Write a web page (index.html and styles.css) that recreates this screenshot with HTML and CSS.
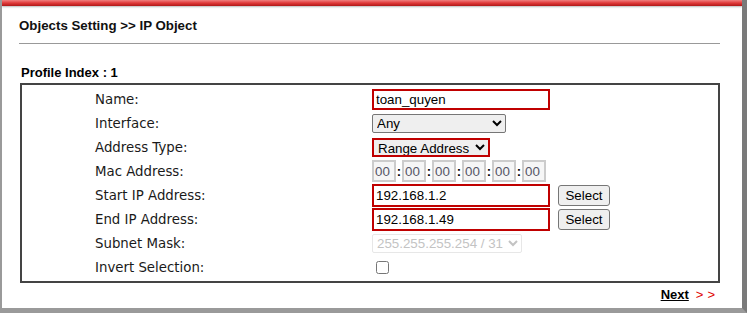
FILE: index.html
```html
<!DOCTYPE html>
<html lang="en">
<head>
  <title>IP Object</title>
  <link rel="stylesheet" href="styles.css">
</head>
<body>
  <div class="page">
    <div class="topbar"></div>
    <div class="content">
      <h1 class="title">Objects Setting &gt;&gt; IP Object</h1>
      <hr class="sep">
      <div class="profile">Profile Index : 1</div>
      <div class="box">
        <div class="row">
          <label class="lbl">Name:</label>
          <div class="ctl"><input type="text" class="txt mark name" value="toan_quyen"></div>
        </div>
        <div class="row">
          <label class="lbl">Interface:</label>
          <div class="ctl">
            <select class="sel iface"><option>Any</option></select>
          </div>
        </div>
        <div class="row">
          <label class="lbl">Address Type:</label>
          <div class="ctl">
            <select class="sel mark atype"><option>Range Address</option></select>
          </div>
        </div>
        <div class="row">
          <label class="lbl">Mac Address:</label>
          <div class="ctl mac">
            <input class="macbox" value="00" disabled><span class="colon">:</span>
            <input class="macbox" value="00" disabled><span class="colon">:</span>
            <input class="macbox" value="00" disabled><span class="colon">:</span>
            <input class="macbox" value="00" disabled><span class="colon">:</span>
            <input class="macbox" value="00" disabled><span class="colon">:</span>
            <input class="macbox" value="00" disabled>
          </div>
        </div>
        <div class="row">
          <label class="lbl">Start IP Address:</label>
          <div class="ctl">
            <input type="text" class="txt mark ip" value="192.168.1.2">
            <button class="btn">Select</button>
          </div>
        </div>
        <div class="row">
          <label class="lbl">End IP Address:</label>
          <div class="ctl">
            <input type="text" class="txt mark ip" value="192.168.1.49">
            <button class="btn">Select</button>
          </div>
        </div>
        <div class="row">
          <label class="lbl">Subnet Mask:</label>
          <div class="ctl">
            <select class="sel mask" disabled><option>255.255.255.254 / 31</option></select>
          </div>
        </div>
        <div class="row">
          <label class="lbl">Invert Selection:</label>
          <div class="ctl"><input type="checkbox" class="chk"></div>
        </div>
      </div>
      <div class="nav">
        <a href="#" class="next">Next</a><span class="arrows">&gt;&gt;</span>
      </div>
    </div>
  </div>
</body>
</html>
```

FILE: styles.css
```css
body {
  margin: 0;
  background: #fff;
  font-family: "Liberation Sans", Arial, sans-serif;
}

.page {
  width: 747px;
  height: 313px;
  box-sizing: border-box;
  border-left: 2px solid #9a9a9a;
  border-right: 5px solid #7a7a7a;
  border-bottom: 5px solid #9a9a9a;
  overflow: hidden;
}

.topbar {
  height: 6px;
  background: linear-gradient(#f08080, #e03a3a 50%, #b01818);
  box-shadow: 0 1px 2px #bbb;
}

.content {
  padding: 12px 22px 0 17px;
}

.title {
  margin: 0;
  font-size: 13.3px;
  font-weight: bold;
  color: #111;
  line-height: 16px;
}

.sep {
  margin: 9px 0 0 0;
  border: 0;
  border-top: 1px solid #999;
  height: 0;
}

.profile {
  margin: 21px 0 0 2px;
  font-size: 13px;
  font-weight: bold;
  line-height: 15px;
}

.box {
  margin: 3px 0 0 1px;
  border: 2px solid #444;
  padding: 2px 0 2px;
}

.row {
  display: grid;
  grid-template-columns: 350px 1fr;
  height: 24px;
  align-items: center;
}

.lbl {
  padding-left: 73px;
  font-family: "DejaVu Sans", Verdana, sans-serif;
  font-size: 13.33px;
  color: #1a1a1a;
}

.ctl {
  display: flex;
  align-items: center;
  gap: 8px;
}

.txt {
  box-sizing: border-box;
  font-family: "Liberation Sans", Arial, sans-serif;
  font-size: 13.33px;
  padding: 0 2px;
  margin: 0;
  border: 1px solid #767676;
}

.mark {
  border: 2px solid #c00000;
}

.name {
  width: 178px;
  height: 21px;
}

.ip {
  width: 178px;
  height: 23px;
}

.sel {
  font-family: "Liberation Sans", Arial, sans-serif;
  font-size: 13.33px;
  margin: 0;
  box-sizing: border-box;
  height: 19px;
  border-radius: 2px;
}

.iface {
  width: 134px;
}

.atype {
  width: 118px;
  border-radius: 0;
}

.mask {
  width: 150px;
  color: #aaa;
  border: 1px solid #ddd;
  background: #fff;
}

.mac {
  gap: 0;
}

.macbox {
  box-sizing: border-box;
  width: 24px;
  height: 22px;
  border: 2px solid #ccc;
  background: #f6f6f6;
  color: #556;
  font-family: "Liberation Sans", Arial, sans-serif;
  font-size: 13.33px;
  padding: 0 1px;
  margin: 0;
}

.colon {
  width: 6px;
  text-align: center;
  font-weight: bold;
  font-size: 13px;
}

.btn {
  box-sizing: border-box;
  width: 52px;
  height: 21px;
  font-family: "Liberation Sans", Arial, sans-serif;
  font-size: 13.33px;
  background: #efefef;
  border: 1px solid #767676;
  border-radius: 3px;
  padding: 0;
}

.chk {
  margin: 0 0 0 4px;
  width: 13px;
  height: 13px;
}

.nav {
  text-align: right;
  padding-right: 1px;
  margin-top: 4px;
  font-size: 13px;
}

.next {
  color: #000;
  font-weight: bold;
  text-decoration: underline;
}

.arrows {
  color: #e00000;
  margin-left: 7px;
  letter-spacing: 4px;
}
```
